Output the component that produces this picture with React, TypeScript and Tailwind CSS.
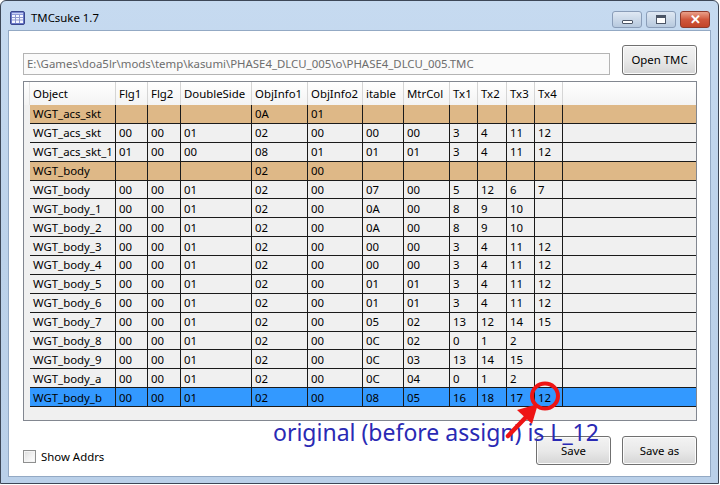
import clsx from 'clsx'

const cols = [
  { name: 'Object', w: 'w-[86px]' },
  { name: 'Flg1', w: 'w-[32px]' },
  { name: 'Flg2', w: 'w-[33px]' },
  { name: 'DoubleSide', w: 'w-[71px]' },
  { name: 'ObjInfo1', w: 'w-[56px]' },
  { name: 'ObjInfo2', w: 'w-[55px]' },
  { name: 'itable', w: 'w-[41px]' },
  { name: 'MtrCol', w: 'w-[46px]' },
  { name: 'Tx1', w: 'w-[28px]' },
  { name: 'Tx2', w: 'w-[29px]' },
  { name: 'Tx3', w: 'w-[28px]' },
  { name: 'Tx4', w: 'w-[28px]' },
]

type Row = { kind: 'group' | 'normal' | 'selected'; cells: string[] }

const rows: Row[] = [
  { kind: 'group', cells: ['WGT_acs_skt', '', '', '', '0A', '01', '', '', '', '', '', ''] },
  { kind: 'normal', cells: ['WGT_acs_skt', '00', '00', '01', '02', '00', '00', '00', '3', '4', '11', '12'] },
  { kind: 'normal', cells: ['WGT_acs_skt_1', '01', '00', '00', '08', '01', '01', '01', '3', '4', '11', '12'] },
  { kind: 'group', cells: ['WGT_body', '', '', '', '02', '00', '', '', '', '', '', ''] },
  { kind: 'normal', cells: ['WGT_body', '00', '00', '01', '02', '00', '07', '00', '5', '12', '6', '7'] },
  { kind: 'normal', cells: ['WGT_body_1', '00', '00', '01', '02', '00', '0A', '00', '8', '9', '10', ''] },
  { kind: 'normal', cells: ['WGT_body_2', '00', '00', '01', '02', '00', '0A', '00', '8', '9', '10', ''] },
  { kind: 'normal', cells: ['WGT_body_3', '00', '00', '01', '02', '00', '00', '00', '3', '4', '11', '12'] },
  { kind: 'normal', cells: ['WGT_body_4', '00', '00', '01', '02', '00', '00', '00', '3', '4', '11', '12'] },
  { kind: 'normal', cells: ['WGT_body_5', '00', '00', '01', '02', '00', '01', '01', '3', '4', '11', '12'] },
  { kind: 'normal', cells: ['WGT_body_6', '00', '00', '01', '02', '00', '01', '01', '3', '4', '11', '12'] },
  { kind: 'normal', cells: ['WGT_body_7', '00', '00', '01', '02', '00', '05', '02', '13', '12', '14', '15'] },
  { kind: 'normal', cells: ['WGT_body_8', '00', '00', '01', '02', '00', '0C', '02', '0', '1', '2', ''] },
  { kind: 'normal', cells: ['WGT_body_9', '00', '00', '01', '02', '00', '0C', '03', '13', '14', '15', ''] },
  { kind: 'normal', cells: ['WGT_body_a', '00', '00', '01', '02', '00', '0C', '04', '0', '1', '2', ''] },
  { kind: 'selected', cells: ['WGT_body_b', '00', '00', '01', '02', '00', '08', '05', '16', '18', '17', '12'] },
]

const btn =
  'flex items-center justify-center rounded-[3px] border border-[#707070] bg-gradient-to-b from-[#f3f3f3] via-[#e9e9e9] to-[#d6d6d6] text-[11.4px] text-black shadow-[inset_0_0_0_1px_#fcfcfc]'

const AppIcon = () => (
  <svg width="15" height="14" viewBox="0 0 15 14">
    <rect x="0.5" y="0.5" width="14" height="13" rx="1.5" fill="#6a78c8" stroke="#3a468c" />
    <rect x="2" y="4" width="11" height="8" fill="#f4f6ff" />
    <path d="M2 6.5h11M2 9h11M5.5 4v8M9.5 4v8" stroke="#8e98cf" strokeWidth="1" />
    <rect x="2" y="1.8" width="11" height="1.6" fill="#c9d0f3" />
  </svg>
)

const CaptionButtons = () => (
  <div className="flex items-start gap-[4px] pt-[10px]">
    <div className="flex h-[17px] w-[30px] items-center justify-center rounded-[3px] border border-[#8a9db8] bg-gradient-to-b from-[#dfe8f3] to-[#b7c9de]">
      <div className="mt-[5px] h-[4px] w-[11px] rounded-[1px] border border-[#4b5566] bg-white" />
    </div>
    <div className="flex h-[17px] w-[30px] items-center justify-center rounded-[3px] border border-[#8a9db8] bg-gradient-to-b from-[#dfe8f3] to-[#b7c9de]">
      <div className="h-[9px] w-[10px] border border-[#4b5566] border-t-[3px] bg-white" />
    </div>
    <div className="flex h-[17px] w-[30px] items-center justify-center rounded-[3px] border border-[#8d3a2c] bg-gradient-to-b from-[#e9a08a] via-[#d0573c] to-[#c24428] text-[13px] font-bold leading-none text-white">
      ✕
    </div>
  </div>
)

export default function App() {
  return (
    <div className="relative h-[485px] w-[720px] overflow-hidden bg-white font-['Noto_Sans',sans-serif]">
      <div className="flex h-[484px] w-[719px] flex-col rounded-t-[6px] border border-[#3d4757] bg-gradient-to-b from-[#c6daf0] via-[#bcd2ea] to-[#bad0e9]">
        {/* title bar */}
        <div className="flex h-[29px] items-start justify-between pr-[8px]">
          <div className="flex items-center gap-[6px] pl-[9px] pt-[10px]">
            <AppIcon />
            <span className="text-[11.4px] leading-none text-black">TMCsuke 1.7</span>
          </div>
          <CaptionButtons />
        </div>

        {/* client area */}
        <div className="mx-[7px] flex h-[447px] flex-col border border-[#93a9c4] bg-white pl-[14px] pr-[13px]">
          <div className="flex items-end gap-[12px] pt-[14px]">
            <div className="flex h-[22px] flex-1 items-center border border-[#b4b4b4] bg-[#fafafa] pl-[3px] text-[11.4px] text-[#6d6d6d]">
              E:\Games\doa5lr\mods\temp\kasumi\PHASE4_DLCU_005\o\PHASE4_DLCU_005.TMC
            </div>
            <div className={clsx(btn, 'h-[30px] w-[75px]')}>Open TMC</div>
          </div>

          {/* grid */}
          <div className="mt-[6px] flex h-[340px] flex-col border border-[#828790] bg-[#f0f0f0] text-[11.4px] text-black">
            <div className="flex h-[23px] bg-gradient-to-b from-white to-[#f3f3f3]">
              <div className="w-[6px] border-r border-[#e3e3e3]" />
              {cols.map((c) => (
                <div
                  key={c.name}
                  className={clsx(c.w, 'flex shrink-0 items-center border-r border-[#d5d5d5] pl-[3px]')}
                >
                  {c.name}
                </div>
              ))}
              <div className="flex-1" />
            </div>
            {rows.map((r, i) => (
              <div
                key={i}
                className={clsx(
                  'flex h-[18.875px]',
                  r.kind === 'group' && 'bg-[#deb887]',
                  r.kind === 'normal' && 'bg-[#f0f0f0]',
                  r.kind === 'selected' && 'bg-[#3399ff]',
                )}
              >
                <div className="w-[6px] bg-[#f0f0f0]" />
                {r.cells.map((v, j) => (
                  <div
                    key={j}
                    className={clsx(
                      cols[j].w,
                      'flex shrink-0 items-center overflow-hidden whitespace-nowrap border-r border-b border-[#1a1a1a] pl-[3px]',
                    )}
                  >
                    {v}
                  </div>
                ))}
                <div className="flex-1 border-b border-[#1a1a1a]" />
              </div>
            ))}
            <div className="flex flex-1">
              <div className="w-[6px]" />
            </div>
          </div>

          {/* bottom */}
          <div className="mt-[15px] flex items-end justify-between">
            <label className="flex items-center gap-[5px] text-[11.4px] text-black">
              <span className="h-[13px] w-[13px] border border-[#8e8f8f] bg-gradient-to-br from-[#dcdcdc] via-[#f0f0f0] to-white shadow-[inset_0_0_0_1px_#f4f4f4]" />
              Show Addrs
            </label>
            <div className="flex gap-[11px]">
              <div className={clsx(btn, 'h-[29px] w-[75px]')}>Save</div>
              <div className={clsx(btn, 'h-[29px] w-[75px]')}>Save as</div>
            </div>
          </div>
        </div>
      </div>

      {/* annotation overlay */}
      <div className="pointer-events-none absolute left-[273px] top-[421px] whitespace-nowrap text-[23px] leading-[23px] text-[#2a2ab4]">
        original (before assign) is L_12
      </div>
      <svg className="pointer-events-none absolute left-0 top-0" width="720" height="485">
        <ellipse cx="545" cy="396" rx="13" ry="12.5" fill="none" stroke="#ee1414" strokeWidth="4" />
        <path d="M508 436 L529 414" stroke="#ee1414" strokeWidth="4.5" strokeLinecap="round" />
        <path d="M538 404 L517 410 L532 424 Z" fill="#ee1414" />
      </svg>
    </div>
  )
}
